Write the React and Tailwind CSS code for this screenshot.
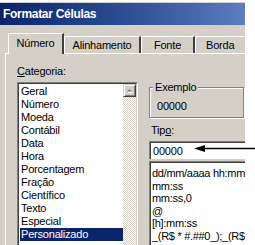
import React from "react";

const cats = ["Geral","Número","Moeda","Contábil","Data","Hora","Porcentagem","Fração","Científico","Texto","Especial","Personalizado"];
const types = ["dd/mm/aaaa hh:mm","mm:ss","mm:ss,0","@","[h]:mm:ss","_(R$ * #.##0_);_(R$ * (#.##0);_(R$ * \"-\"_);_(@_)"];

function Tab({ children, active, className = "" }) {
  return (
    <div
      className={
        "flex items-center justify-center border-t border-l border-white border-r-[2px] border-r-[#404040] bg-[#d4d0c8] " +
        (active ? "h-[21px] relative z-10 -mb-[1px] pb-[2px]" : "h-[17px]") +
        " " + className
      }
    >
      {children}
    </div>
  );
}

export default function App() {
  return (
    <div className="relative w-[255px] h-[245px] overflow-hidden bg-white text-[11px] leading-[13px] text-black font-['Liberation_Sans',Arial,sans-serif] tracking-[-0.2px]">
      <div className="flex flex-col w-[245px] h-full bg-[#d4d0c8] overflow-hidden">
        <div className="h-[2px] bg-white shrink-0" />
        <div className="h-[1px] bg-[#d4d0c8] shrink-0" />
        <div className="h-[22px] shrink-0 flex items-center pl-[3px] bg-gradient-to-r from-[#0a246a] via-[#2c4d93] to-[#5a7ec0] text-white font-bold text-[12px] tracking-[-0.3px]">
          Formatar Células
        </div>
        <div className="h-[8px] shrink-0" />
        <div className="flex items-end h-[20px] shrink-0 pl-[8px]">
          <Tab active className="w-[56px] shrink-0">Número</Tab>
          <Tab className="w-[77px] shrink-0">Alinhamento</Tab>
          <Tab className="w-[54px] shrink-0">Fonte</Tab>
          <Tab className="w-[64px] shrink-0 justify-start pl-[10px]">Borda</Tab>
        </div>
        <div className="flex-1 ml-[5px] border-t border-l border-white flex min-h-0">
          <div className="pl-[11px] pt-[11px] flex flex-col w-[132px] shrink-0">
            <div className="h-[13px]"><span className="underline">C</span>ategoria:</div>
            <div className="mt-[4px] flex-1 border-t border-l border-[#808080] border-b-0 border-r border-r-white">
              <div className="h-full border-t border-l border-[#404040] border-r border-r-[#d4d0c8] bg-white flex">
                <div className="flex-1 pt-[1px] pl-[1px]">
                  {cats.map((c) => (
                    <div
                      key={c}
                      className={
                        "h-[13px] pl-[1px] whitespace-nowrap " +
                        (c === "Personalizado" ? "bg-[#0a246a] text-white" : "")
                      }
                    >
                      {c}
                    </div>
                  ))}
                </div>
                <div className="w-[13px] shrink-0 flex flex-col bg-[repeating-conic-gradient(#d4d0c8_0_25%,#ffffff_0_50%)] bg-[length:2px_2px]">
                  <div className="h-[13px] bg-[#d4d0c8] border-t border-l border-[#d4d0c8] border-r border-b border-r-[#404040] border-b-[#404040] shadow-[inset_1px_1px_0_#ffffff,inset_-1px_-1px_0_#808080] flex items-center justify-center">
                    <svg width="7" height="5" viewBox="0 0 7 5">
                      <path d="M1 3.5 L3.5 1 L6 3.5 Z" fill="#808080" />
                      <path d="M2 4.5 L6 4.5" stroke="#ffffff" strokeWidth="1" />
                    </svg>
                  </div>
                </div>
              </div>
            </div>
          </div>
          <div className="ml-[11px] flex flex-col w-[110px] shrink-0">
            <div className="mt-[33px] h-[31px] w-[95px] relative border border-[#808080] shadow-[1px_1px_0_#ffffff,inset_1px_1px_0_#ffffff]">
              <div className="absolute -top-[7px] left-[3px] px-[2px] bg-[#d4d0c8] h-[13px]">Exemplo</div>
              <div className="pl-[7px] pt-[12px]">00000</div>
            </div>
            <div className="mt-[6px] pl-[2px] h-[13px]">Tip<span className="underline">o</span>:</div>
            <div className="mt-[4px] h-[18px] border-t border-l border-[#808080]">
              <div className="h-full border-t border-l border-[#404040] bg-white pl-[2px] pt-[2px]">00000</div>
            </div>
            <div className="mt-[2px] flex-1 border-t border-l border-[#808080]">
              <div className="h-full border-t border-l border-[#404040] bg-white pl-[1px] pt-[4px] leading-[12.6px] whitespace-nowrap overflow-hidden tracking-[-0.3px]">
                {types.map((t) => (
                  <div key={t} className="h-[12.6px]">{t}</div>
                ))}
              </div>
            </div>
          </div>
        </div>
      </div>
      <svg className="absolute left-[194px] top-[144px]" width="61" height="9" viewBox="0 0 61 9">
        <path d="M8 4.5 L61 4.5" stroke="#000" strokeWidth="1.6" />
        <path d="M0 4.5 L11 1 L11 8 Z" fill="#000" />
      </svg>
    </div>
  );
}
